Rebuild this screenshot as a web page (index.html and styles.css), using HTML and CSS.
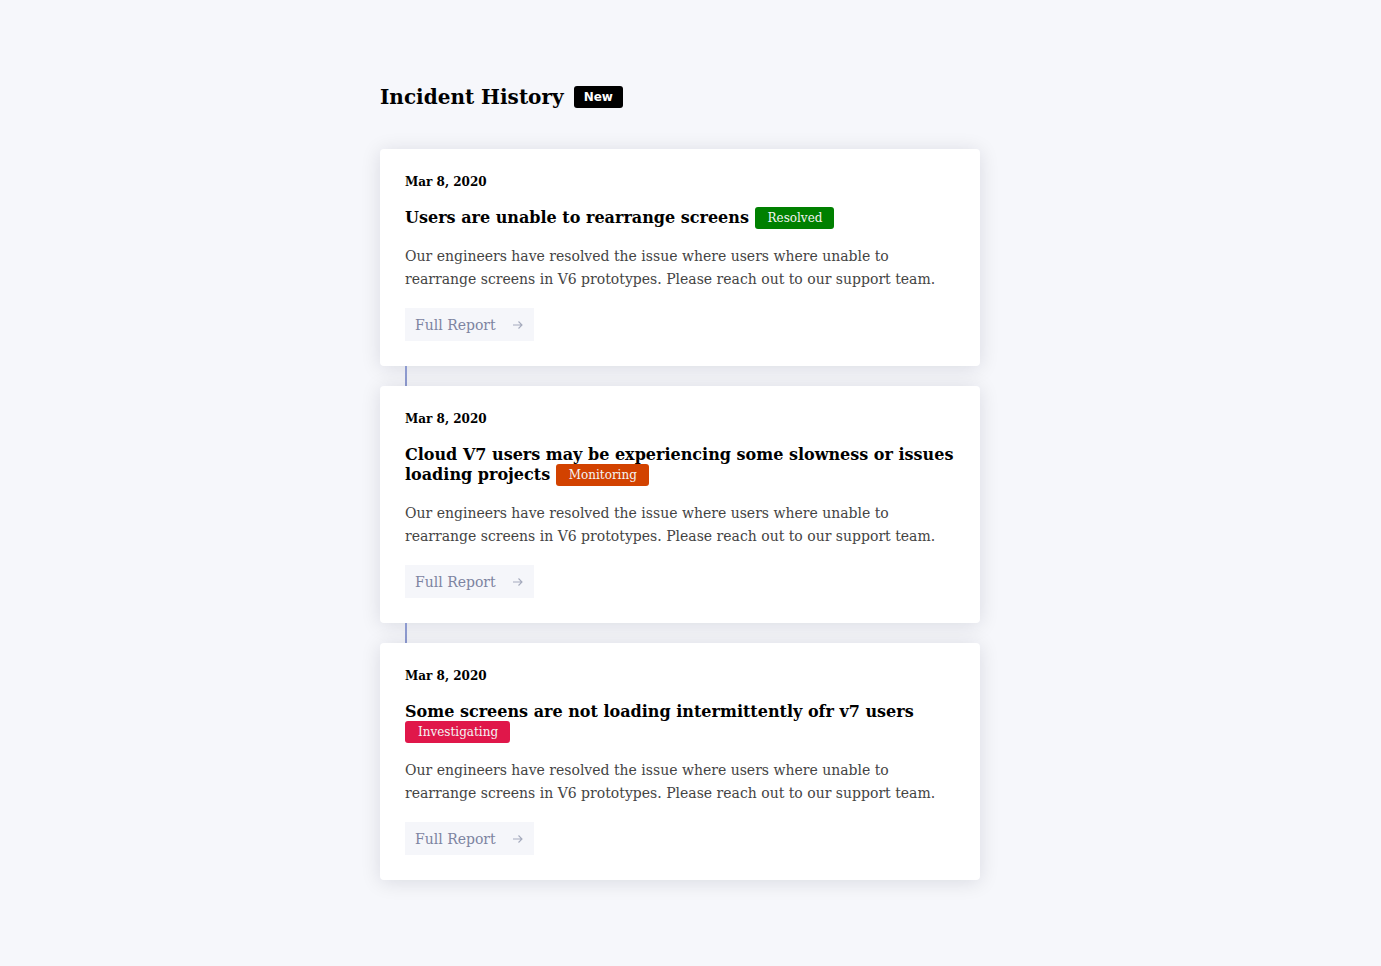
FILE: index.html
```html
<!DOCTYPE html>
<html>
<head>
<meta charset="utf-8">
<link rel="stylesheet" href="styles.css">
</head>
<body>
<main class="page">
  <header class="page-head">
    <h1 class="page-title">Incident History</h1>
    <span class="tag-new">New</span>
  </header>
  <section class="timeline">
    <article class="card">
      <div class="date">Mar 8, 2020</div>
      <h2 class="title">Users are unable to rearrange screens <span class="badge badge-resolved">Resolved</span></h2>
      <p class="desc">Our engineers have resolved the issue where users where unable to rearrange screens in V6 prototypes. Please reach out to our support team.</p>
      <a class="report-btn" href="#">Full Report <svg class="arrow" width="12" height="10" viewBox="0 0 12 10"><path d="M1 5h9M6.5 1.5L10 5 6.5 8.5" fill="none" stroke="currentColor" stroke-width="1.1"/></svg></a>
    </article>
    <div class="connector"><span class="line"></span></div>
    <article class="card">
      <div class="date">Mar 8, 2020</div>
      <h2 class="title">Cloud V7 users may be experiencing some slowness or issues loading projects <span class="badge badge-monitoring">Monitoring</span></h2>
      <p class="desc">Our engineers have resolved the issue where users where unable to rearrange screens in V6 prototypes. Please reach out to our support team.</p>
      <a class="report-btn" href="#">Full Report <svg class="arrow" width="12" height="10" viewBox="0 0 12 10"><path d="M1 5h9M6.5 1.5L10 5 6.5 8.5" fill="none" stroke="currentColor" stroke-width="1.1"/></svg></a>
    </article>
    <div class="connector"><span class="line"></span></div>
    <article class="card">
      <div class="date">Mar 8, 2020</div>
      <h2 class="title">Some screens are not loading intermittently ofr v7 users <span class="badge badge-investigating">Investigating</span></h2>
      <p class="desc">Our engineers have resolved the issue where users where unable to rearrange screens in V6 prototypes. Please reach out to our support team.</p>
      <a class="report-btn" href="#">Full Report <svg class="arrow" width="12" height="10" viewBox="0 0 12 10"><path d="M1 5h9M6.5 1.5L10 5 6.5 8.5" fill="none" stroke="currentColor" stroke-width="1.1"/></svg></a>
    </article>
  </section>
</main>
</body>
</html>
```
FILE: styles.css
```css
html, body {
  margin: 0;
  padding: 0;
}
body {
  background: #f6f7fb;
  font-family: "DejaVu Serif", serif;
  color: #000;
}
.page {
  width: 621px;
  margin: 0 auto;
  padding-top: 82px;
  padding-bottom: 80px;
}
.page-head {
  display: flex;
  align-items: center;
  gap: 10px;
  margin-bottom: 37px;
}
.page-title {
  margin: 0;
  font-size: 20px;
  font-weight: bold;
  line-height: 30px;
}
.tag-new {
  font-family: "DejaVu Sans", sans-serif;
  font-weight: bold;
  font-size: 12px;
  color: #fff;
  background: #000;
  border-radius: 3px;
  padding: 0 10px;
  line-height: 22px;
  height: 22px;
}
.timeline {
  width: 600px;
  display: flex;
  flex-direction: column;
}
.card {
  background: #fff;
  border-radius: 4px;
  box-shadow: 0 2px 20px rgba(10, 15, 40, 0.12);
  padding: 25px 25px 25px;
}
.connector {
  height: 20px;
  padding-left: 25px;
  display: flex;
}
.line {
  width: 2px;
  background: #8e9bd0;
}
.date {
  font-size: 12px;
  font-weight: bold;
  line-height: 16px;
}
.title {
  margin: 18px 0 0;
  font-size: 16px;
  font-weight: bold;
  line-height: 20px;
}
.badge {
  font-size: 12px;
  font-weight: normal;
  color: #f4f4f4;
  border-radius: 3px;
  padding: 4px 12px 4px 13px;
  line-height: 20px;
  position: relative;
  top: -1px;
}
.badge-resolved { background: #008000; }
.badge-monitoring { background: #d24200; }
.badge-investigating { background: #e0174a; }
.desc {
  margin: 16px 0 0;
  font-size: 14px;
  line-height: 23px;
  color: #444;
  max-width: 540px;
}
.report-btn {
  display: inline-flex;
  align-items: center;
  gap: 16px;
  margin-top: 17px;
  padding: 0 10px;
  height: 33px;
  background: #f5f6fa;
  color: #7d84a1;
  font-size: 14px;
  text-decoration: none;
}
.arrow {
  color: #a5aabd;
}
```
